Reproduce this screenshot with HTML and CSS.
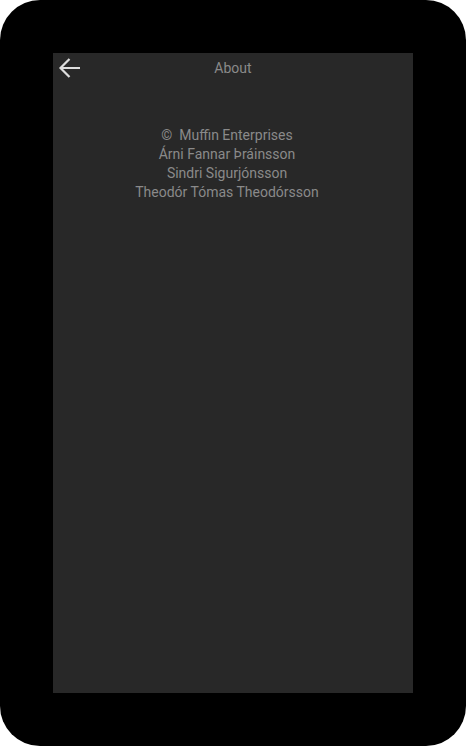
FILE: index.html
```html
<!DOCTYPE html>
<html>
<head>
<meta charset="utf-8">
<link rel="stylesheet" href="styles.css">
</head>
<body>
<div class="frame">
  <div class="screen">
    <div class="header">
      <button class="back" aria-label="Back">
        <svg width="24" height="24" viewBox="0 0 24 24"><path d="M22 12H2.5M11.5 3 2.5 12l9 9" fill="none" stroke="#dddddd" stroke-width="2.2"/></svg>
      </button>
      <div class="title">About</div>
    </div>
    <div class="credits">
      <div>©&nbsp; Muffin Enterprises</div>
      <div>Árni Fannar Þráinsson</div>
      <div>Sindri Sigurjónsson</div>
      <div>Theodór Tómas Theodórsson</div>
    </div>
  </div>
</div>
</body>
</html>
```
FILE: styles.css
```css
html, body {
  margin: 0;
  padding: 0;
  background: #ffffff;
}
.frame {
  width: 466px;
  height: 746px;
  background: #000000;
  border-radius: 40px;
  padding: 53px;
  box-sizing: border-box;
}
.screen {
  width: 360px;
  height: 640px;
  background: #282828;
  font-family: Roboto, "Noto Sans", sans-serif;
  font-size: 14px;
  color: #8a8a8a;
}
.header {
  position: relative;
  height: 31px;
  display: flex;
  align-items: center;
  justify-content: center;
}
.title {
  line-height: 31px;
}
.back {
  position: absolute;
  left: 5px;
  top: 3px;
  width: 24px;
  height: 24px;
  padding: 0;
  border: 0;
  background: none;
  display: flex;
}
.credits {
  margin-top: 42px;
  padding-right: 12px;
  text-align: center;
  line-height: 19px;
}
```
